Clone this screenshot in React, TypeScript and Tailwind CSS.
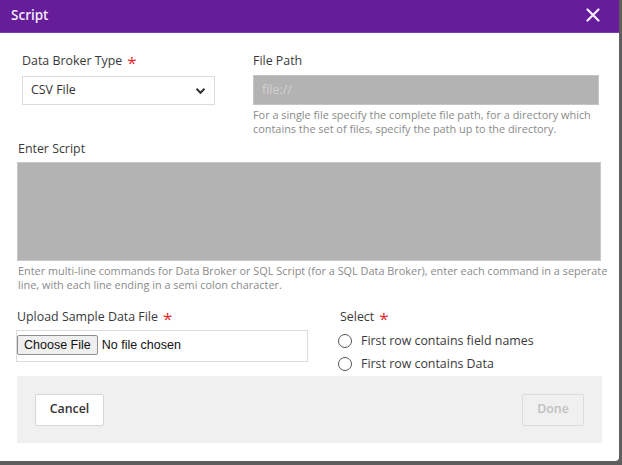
import React from "react";

const font = { fontFamily: '"Open Sans", "Noto Sans", sans-serif' };
const arial = { fontFamily: '"Liberation Sans", Arial, sans-serif' };

function Star() {
  return <span className="ml-[5px] text-[17px] leading-none text-[#e5282b] relative top-[2px]">*</span>;
}

export default function App() {
  return (
    <div className="w-[622px] h-[465px] bg-[#5e5e5e]" style={font}>
      <div className="w-[619px] h-[461px] bg-white rounded-br-[4px] overflow-hidden flex flex-col">
        <div className="h-[33px] bg-[#651d9a] border-b border-[#7b3cab] flex items-center justify-between pl-[11px] pr-[19px]">
          <span className="text-[13.5px] font-semibold text-[#f3eaf8] leading-none">Script</span>
          <svg width="14" height="14" viewBox="0 0 14 14" className="mt-[-2px]">
            <path d="M1.5 1.5 L12.5 12.5 M12.5 1.5 L1.5 12.5" stroke="#f6eefa" strokeWidth="2.2" strokeLinecap="round" />
          </svg>
        </div>

        <div className="flex pt-[19px]">
          <div className="ml-[22px] w-[193px] flex flex-col">
            <div className="h-[18px] text-[12.4px] leading-[18px] text-[#3a3a3a] flex items-start">
              Data Broker Type<Star />
            </div>
            <div className="mt-[6px] h-[29px] border border-[#dcdcdc] flex items-center justify-between pl-[8px] pr-[8px]">
              <span className="text-[12.4px] text-[#333]">CSV File</span>
              <svg width="11" height="8" viewBox="0 0 11 8">
                <path d="M1.5 1.8 L5.5 5.8 L9.5 1.8" stroke="#333" strokeWidth="2" fill="none" />
              </svg>
            </div>
          </div>
          <div className="ml-[38px] w-[346px] flex flex-col">
            <div className="h-[18px] text-[12.4px] leading-[18px] text-[#3a3a3a]">File Path</div>
            <div className="mt-[5px] h-[30px] bg-[#b3b3b3] border border-[#c4c4c4] flex items-center pl-[8px]">
              <span className="text-[12.4px] text-[#d2d2d2]">file://</span>
            </div>
            <div className="mt-[3px] w-[354px] text-[10.9px] leading-[14px] text-[#8a8a8a]">
              For a single file specify the complete file path, for a directory which<br />contains the set of files, specify the path up to the directory.
            </div>
          </div>
        </div>

        <div className="mt-[4px] ml-[17px] w-[584px] flex flex-col">
          <div className="h-[18px] text-[12.4px] leading-[18px] text-[#3a3a3a] pl-[1px]">Enter Script</div>
          <div className="mt-[4px] h-[99px] bg-[#b3b3b3] border border-[#c8c8c8]" />
          <div className="mt-[3px] w-[600px] text-[10.9px] leading-[14px] text-[#8a8a8a] pl-[1px]">
            Enter multi-line commands for Data Broker or SQL Script (for a SQL Data Broker), enter each command in a seperate<br />line, with each line ending in a semi colon character.
          </div>
        </div>

        <div className="flex mt-[16px]">
          <div className="ml-[16px] w-[292px] flex flex-col">
            <div className="h-[18px] text-[12.4px] leading-[18px] text-[#3a3a3a] pl-[1px] flex items-start">
              Upload Sample Data File<Star />
            </div>
            <div className="mt-[4px] h-[32px] border border-[#dcdcdc] flex items-start pt-[4px]">
              <div
                className="h-[20px] px-[6px] bg-[#efefef] border border-[#8f8f8f] rounded-[2px] text-[12.5px] leading-[18px] text-[#111]"
                style={arial}
              >
                Choose File
              </div>
              <span className="ml-[4px] text-[12.5px] leading-[20px] text-[#111]" style={arial}>
                No file chosen
              </span>
            </div>
          </div>
          <div className="ml-[30px] flex flex-col">
            <div className="h-[18px] text-[12.4px] leading-[18px] text-[#3a3a3a] pl-[2px] flex items-start">
              Select<Star />
            </div>
            <div className="mt-[6px] flex items-center h-[18px]">
              <span className="w-[14px] h-[14px] rounded-full border-[1.5px] border-[#555]" />
              <span className="ml-[9px] text-[12.4px] text-[#3a3a3a]">First row contains field names</span>
            </div>
            <div className="mt-[5px] flex items-center h-[18px]">
              <span className="w-[14px] h-[14px] rounded-full border-[1.5px] border-[#555]" />
              <span className="ml-[9px] text-[12.4px] text-[#3a3a3a]">First row contains Data</span>
            </div>
          </div>
        </div>

        <div className="mt-[3px] ml-[17px] w-[585px] h-[67px] bg-[#f0f0f0] flex items-center justify-between px-[18px]">
          <div className="w-[69px] h-[32px] bg-white border border-[#d6d6d6] rounded-[2px] flex items-center justify-center text-[12.4px] font-semibold text-[#333]">
            Cancel
          </div>
          <div className="w-[62px] h-[32px] border border-[#dcdcdc] rounded-[2px] flex items-center justify-center text-[12.4px] font-semibold text-[#c0c0c0]">
            Done
          </div>
        </div>
      </div>
    </div>
  );
}
